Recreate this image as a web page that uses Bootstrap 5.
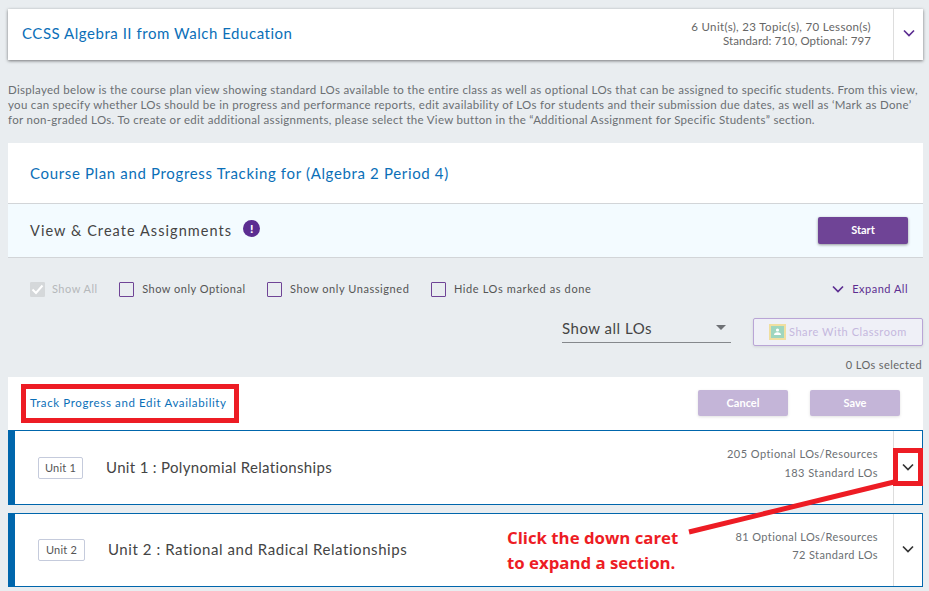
<!doctype html>
<html lang="en"><head><meta charset="utf-8"><title>Course Plan</title>
<link href="https://cdn.jsdelivr.net/npm/bootstrap@5.3.0/dist/css/bootstrap.min.css" rel="stylesheet">
<style>
html,body{height:591px;overflow:hidden}
body{background:#e9edf0;font-family:Lato,"Noto Sans",sans-serif;color:#444;position:relative;padding:9px 6px 0 8px;letter-spacing:.2px}
.hdr-card{height:51px;background:#fff;box-shadow:0 1px 3px rgba(0,0,0,.5)}
.hdr-title{color:#0b6fb8;font-size:15px;padding-left:14px;padding-bottom:2px;letter-spacing:.53px}
.hdr-meta{font-size:11.5px;line-height:14px;color:#666;text-align:right;padding-right:22px;padding-bottom:2px;letter-spacing:.34px}
.hdr-meta-tight{letter-spacing:.08px}
.chev-cell{width:30px;border-left:1px solid #ddd;align-self:stretch}
.unit-card .chev-cell{width:29px}
.chev-top{margin-bottom:4px}
.chev-unit{margin-bottom:2px}
.intro{font-size:11.5px;line-height:15px;color:#6b6f73;margin:22px 0 16px;letter-spacing:.3px;white-space:nowrap}
.plan-head{height:60px;background:#fff;padding:0 0 0 22px;color:#0b6fb8;font-size:15px;letter-spacing:.65px}
.assign-bar{height:55px;background:#f3fbff;border-top:1px solid #d2d5d8;border-bottom:1px solid #d2d5d8;padding:0 15px 0 22px}
.assign-title{font-size:14.5px;color:#444;letter-spacing:1.06px;margin-right:11px}
.info-dot{width:17px;height:17px;border-radius:50%;background:#5c2d91;color:#fff;font-size:12px;font-weight:900;line-height:17px;text-align:center;letter-spacing:0;margin-top:-4px}
.btn-plum{background:#6f4496;color:#fff;border:0;border-radius:2px;width:90px;height:27px;padding:0;font-size:11px;font-weight:700;box-shadow:0 1px 3px rgba(0,0,0,.4)}
.filter-row{height:61px;padding:1px 15px 0 22px;font-size:11px;color:#555;letter-spacing:.5px}
.tick{width:15px;height:15px;border:1px solid #6f4496;border-radius:1px;margin-right:8px;flex:none}
.tick-off{background:#d5d8da;border-color:#d5d8da;display:flex;align-items:center;justify-content:center;margin-right:7px}
.filter-off{color:#b5b8ba}
.filter-gap{margin-right:21.5px}
.filter-mid{letter-spacing:.56px}
.filter-wide{letter-spacing:.62px}
.expand-link{color:#5c2d91}
.ctl-row{height:29px;margin-top:-1px}
.lo-select{width:169px;height:25px;border-bottom:1px solid #85888c;font-size:15px;color:#444;margin-right:22px;padding-top:1px;letter-spacing:.5px;line-height:18px}
.lo-caret{width:0;height:0;border-left:5px solid transparent;border-right:5px solid transparent;border-top:5px solid #6e7175;margin:6px 5px 0 0}
.share-btn{width:170px;height:28px;background:#eff0f7;border:1px solid #b9a5d6;border-radius:2px;font-size:11px;color:#c5b8de;padding:0 0 0 15px;letter-spacing:.55px;box-shadow:0 1px 3px rgba(0,0,0,.1)}
.class-ico{width:17px;height:16px;border:2px solid #f0dfa0;background:#9fd6bf;margin-right:3px;display:flex;align-items:center;justify-content:center;flex:none}
.sel-count{font-size:11px;color:#666;text-align:right;height:30px;line-height:15px;padding-top:10px;padding-right:1px;letter-spacing:.38px;box-sizing:border-box}
.track-head{height:53px;background:#fff;padding:0 23px 1px 22px}
.track-title{color:#0b6fb8;font-size:11.5px;letter-spacing:.62px}
.btn-faint{background:#c4b5d8;color:#fff;border:0;border-radius:2px;width:90px;height:26px;padding:0;font-size:11px;font-weight:700;box-shadow:0 1px 3px rgba(0,0,0,.12)}
.btn-save{margin-left:22px}
.unit-card{height:75px;background:#fff;border:1px solid #0066ac;border-left:7px solid #0066ac}
.unit-second{margin-top:8px;height:74px}
.unit-tag{border:1px solid #c5cbdc;border-radius:2px;height:22px;width:45px;font-size:11px;color:#555;text-align:center;line-height:19px;margin-left:23px;margin-right:23px;flex:none}
.unit-tag-wide{width:47px}
.unit-name{font-size:15px;color:#444;letter-spacing:.33px}
.unit-second .unit-name{letter-spacing:.56px;padding-bottom:2px}
.unit-meta{font-size:11px;line-height:19px;color:#6b6f73;text-align:right;padding:0 15px 9px 0;letter-spacing:.45px}
.unit-second .unit-meta{line-height:18px;letter-spacing:.38px}
.red-box{position:absolute;border:5px solid #ed1c24}
.red-a{left:21px;top:384px;width:218px;height:39px}
.red-b{left:893px;top:448px;width:30px;height:38px}
.red-line{position:absolute;left:0;top:0;pointer-events:none}
.red-note{position:absolute;left:507px;top:525px;font-family:"Open Sans",sans-serif;font-weight:700;font-size:16.8px;line-height:25px;color:#ed1c24;letter-spacing:0;white-space:nowrap}
</style></head>
<body>
<div class="hdr-card d-flex align-items-center">
  <div class="hdr-title flex-grow-1">CCSS Algebra II from Walch Education</div>
  <div class="hdr-meta">6 Unit(s), 23 Topic(s), 70 Lesson(s)<br><span class="hdr-meta-tight">Standard: 710, Optional: 797</span></div>
  <div class="chev-cell d-flex align-items-center justify-content-center"><svg class="chev-top" width="12" height="8" viewBox="0 0 12 8"><path d="M1 1.5 6 6.5 11 1.5" fill="none" stroke="#5c2d91" stroke-width="1.7"/></svg></div>
</div>
<p class="intro">Displayed below is the course plan view showing standard LOs available to the entire class as well as optional LOs that can be assigned to specific students. From this view,<br>you can specify whether LOs should be in progress and performance reports, edit availability of LOs for students and their submission due dates, as well as ‘Mark as Done’<br>for non-graded LOs. To create or edit additional assignments, please select the View button in the “Additional Assignment for Specific Students” section.</p>
<div class="plan-head d-flex align-items-center">Course Plan and Progress Tracking for (Algebra 2 Period 4)</div>
<div class="assign-bar d-flex align-items-center">
  <span class="assign-title">View &amp; Create Assignments</span>
  <span class="info-dot">!</span>
  <button class="btn-plum ms-auto" type="button">Start</button>
</div>
<div class="filter-row d-flex align-items-center">
  <span class="tick tick-off"><svg width="13" height="11" viewBox="0 0 13 11"><path d="M1.5 5.5 5 9 11.5 1.5" fill="none" stroke="#fff" stroke-width="2"/></svg></span><span class="filter-off filter-gap">Show All</span>
  <span class="tick"></span><span class="filter-gap">Show only Optional</span>
  <span class="tick"></span><span class="filter-gap filter-mid">Show only Unassigned</span>
  <span class="tick"></span><span class="filter-wide">Hide LOs marked as done</span>
  <span class="expand-link ms-auto d-flex align-items-center"><svg class="me-2" width="12" height="8" viewBox="0 0 12 8"><path d="M1 1.5 6 6.5 11 1.5" fill="none" stroke="#5c2d91" stroke-width="1.7"/></svg>Expand All</span>
</div>
<div class="ctl-row d-flex justify-content-end align-items-start">
  <div class="lo-select d-flex justify-content-between align-items-start"><span>Show all LOs</span><span class="lo-caret"></span></div>
  <button class="share-btn d-flex align-items-center" type="button"><span class="class-ico"><svg width="11" height="10" viewBox="0 0 11 10"><circle cx="5.5" cy="3" r="1.6" fill="#fff"/><path d="M2 8c0-2 1.5-2.8 3.5-2.8S9 6 9 8z" fill="#fff"/></svg></span>Share With Classroom</button>
</div>
<div class="sel-count">0 LOs selected</div>
<div class="track-head d-flex align-items-center">
  <span class="track-title">Track Progress and Edit Availability</span>
  <button class="btn-faint ms-auto" type="button">Cancel</button>
  <button class="btn-faint btn-save" type="button">Save</button>
</div>
<div class="unit-card unit-first d-flex align-items-center">
  <span class="unit-tag">Unit 1</span>
  <span class="unit-name flex-grow-1">Unit 1 : Polynomial Relationships</span>
  <div class="unit-meta">205 Optional LOs/Resources<br>183 Standard LOs</div>
  <div class="chev-cell d-flex align-items-center justify-content-center"><svg class="chev-unit" width="12" height="8" viewBox="0 0 12 8"><path d="M1 1.5 6 6.5 11 1.5" fill="none" stroke="#333" stroke-width="1.7"/></svg></div>
</div>
<div class="unit-card unit-second d-flex align-items-center">
  <span class="unit-tag unit-tag-wide">Unit 2</span>
  <span class="unit-name flex-grow-1">Unit 2 : Rational and Radical Relationships</span>
  <div class="unit-meta">81 Optional LOs/Resources<br>72 Standard LOs</div>
  <div class="chev-cell d-flex align-items-center justify-content-center"><svg class="chev-unit" width="12" height="8" viewBox="0 0 12 8"><path d="M1 1.5 6 6.5 11 1.5" fill="none" stroke="#333" stroke-width="1.7"/></svg></div>
</div>
<div class="red-box red-a"></div>
<div class="red-box red-b"></div>
<svg class="red-line" width="929" height="591"><line x1="689" y1="532" x2="894" y2="482" stroke="#ed1c24" stroke-width="5"/></svg>
<div class="red-note">Click the down caret<br>to expand a section.</div>
</body></html>
